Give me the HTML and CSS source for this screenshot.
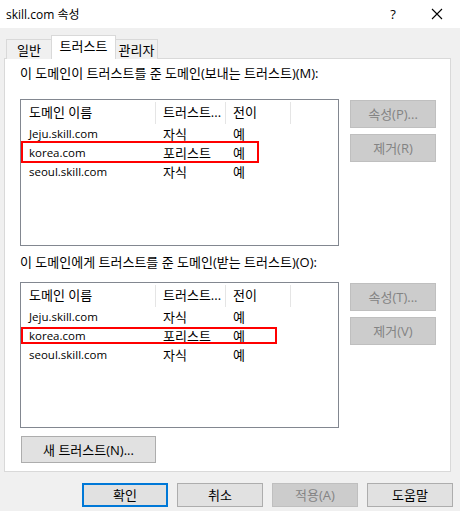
FILE: index.html
```html
<!DOCTYPE html>
<html lang="ko">
<head>
<meta charset="utf-8">
<link rel="stylesheet" href="styles.css">
</head>
<body>
<div class="window">
  <div class="titlebar">
    <span class="title">skill.com 속성</span>
    <span class="help">?</span>
    <span class="close"><svg width="12" height="12" viewBox="0 0 12 12"><path d="M1 1 L11 11 M11 1 L1 11" stroke="#000" stroke-width="1.1" fill="none"/></svg></span>
  </div>
  <div class="tabs">
    <div class="tab">일반</div>
    <div class="tab active">트러스트</div>
    <div class="tab">관리자</div>
  </div>
  <div class="panel">
    <div class="label">이 도메인이 트러스트를 준 도메인(보내는 트러스트)(M):</div>
    <div class="group">
      <div class="list">
        <div class="lhead">
          <div class="c1">도메인 이름</div>
          <div class="c2">트러스트...</div>
          <div class="c3">전이</div>
        </div>
        <div class="lrow"><div class="c1 latin">Jeju.skill.com</div><div class="c2">자식</div><div class="c3">예</div></div>
        <div class="lrow"><div class="c1 latin">korea.com</div><div class="c2">포리스트</div><div class="c3">예</div></div>
        <div class="lrow"><div class="c1 latin">seoul.skill.com</div><div class="c2">자식</div><div class="c3">예</div></div>
        <div class="mark mark1"></div>
      </div>
      <div class="side">
        <div class="btn disabled">속성(P)...</div>
        <div class="btn disabled">제거(R)</div>
      </div>
    </div>
    <div class="label label2">이 도메인에게 트러스트를 준 도메인(받는 트러스트)(O):</div>
    <div class="group">
      <div class="list list2">
        <div class="lhead">
          <div class="c1">도메인 이름</div>
          <div class="c2">트러스트...</div>
          <div class="c3">전이</div>
        </div>
        <div class="lrow"><div class="c1 latin">Jeju.skill.com</div><div class="c2">자식</div><div class="c3">예</div></div>
        <div class="lrow"><div class="c1 latin">korea.com</div><div class="c2">포리스트</div><div class="c3">예</div></div>
        <div class="lrow"><div class="c1 latin">seoul.skill.com</div><div class="c2">자식</div><div class="c3">예</div></div>
        <div class="mark mark2"></div>
      </div>
      <div class="side">
        <div class="btn disabled">속성(T)...</div>
        <div class="btn disabled">제거(V)</div>
      </div>
    </div>
    <div class="btn newtrust">새 트러스트(N)...</div>
  </div>
  <div class="footer">
    <div class="btn fbtn default">확인</div>
    <div class="btn fbtn">취소</div>
    <div class="btn fbtn disabled">적용(A)</div>
    <div class="btn fbtn">도움말</div>
  </div>
</div>
</body>
</html>
```
FILE: styles.css
```css
* { box-sizing: border-box; }
html, body { margin: 0; padding: 0; }
body {
  width: 460px;
  height: 511px;
  background: #f0f0f0;
  font-family: "Open Sans", "Noto Sans CJK KR", sans-serif;
  font-size: 13px;
  color: #000;
  overflow: hidden;
}
.window { width: 460px; height: 511px; display: flex; flex-direction: column; }
.titlebar {
  height: 28px;
  background: #fff;
  display: flex;
  align-items: center;
  padding-left: 6px;
}
.title { flex: 1; font-size: 12px; }
.help { width: 14px; text-align: center; margin-right: 30px; font-size: 13px; }
.close { width: 14px; display: flex; justify-content: center; margin-right: 16px; }
.tabs {
  display: flex;
  align-items: flex-end;
  height: 31px;
  padding-left: 6px;
  margin-top: -1px;
  position: relative;
  z-index: 1;
}
.tab {
  height: 20px;
  border: 1px solid #d9d9d9;
  border-bottom: none;
  background: #f0f0f0;
  display: flex;
  align-items: center;
  justify-content: center;
  line-height: 16px;
  margin-bottom: -1px;
}
.tab:first-child { width: 46px; }
.tab:nth-child(3) { width: 43px; border-left: none; }
.tab.active {
  width: 65px;
  height: 24px;
  background: #fff;
  margin-left: -1px;
  margin-right: -1px;
  align-items: flex-start;
  padding-top: 2px;
  position: relative;
  z-index: 2;
}
.tab.active + .tab { border-left: 1px solid #d9d9d9; margin-left: 0; }
.panel {
  margin-left: 4px;
  width: 447px;
  height: 414px;
  background: #fff;
  border: 1px solid #d9d9d9;
  padding: 6px 0 0 15px;
  display: flex;
  flex-direction: column;
  align-items: flex-start;
}
.label { line-height: 16px; height: 16px; white-space: nowrap; }
.group { display: flex; align-items: flex-start; margin-top: 18px; }
.label2 { margin-top: 8px; }
.label2 + .group { margin-top: 12px; }
.list {
  width: 319px;
  height: 147px;
  border: 1px solid #828790;
  position: relative;
  background: #fff;
}
.list2 { height: 146px; }
.lhead { display: flex; height: 24px; align-items: center; }
.lrow { display: flex; height: 19px; align-items: center; }
.c1, .c2, .c3 { white-space: nowrap; line-height: 16px; overflow: hidden; }
.c1 { width: 135px; padding-left: 8px; }
.c2 { width: 70px; padding-left: 7px; }
.c3 { width: 65px; padding-left: 7px; }
.latin { font-size: 11.5px; }
.lhead .c1, .lhead .c2, .lhead .c3 {
  height: 22px;
  margin-top: 2px;
  display: flex;
  align-items: center;
  padding-bottom: 2px;
  border-right: 1px solid #e5e5e5;
}
.mark {
  position: absolute;
  left: 0;
  border: 2px solid #ff0000;
}
.mark1 { top: 41px; width: 238px; height: 22px; }
.mark2 { top: 44px; width: 256px; height: 17px; }
.side { display: flex; flex-direction: column; gap: 6px; margin-left: 11px; margin-top: 1px; }
.btn {
  width: 86px;
  height: 28px;
  border: 1px solid #adadad;
  background: #e1e1e1;
  display: flex;
  align-items: center;
  justify-content: center;
  line-height: 16px;
  white-space: nowrap;
}
.btn.disabled { background: #cccccc; border-color: #bfbfbf; color: #838383; }
.newtrust { width: 135px; height: 27px; margin-top: 8px; margin-left: 1px; }
.footer {
  display: flex;
  justify-content: flex-end;
  gap: 9px;
  padding-right: 7px;
  margin-top: 11px;
}
.fbtn { height: 24px; }
.fbtn.default { border: 2px solid #0078d7; }
```
